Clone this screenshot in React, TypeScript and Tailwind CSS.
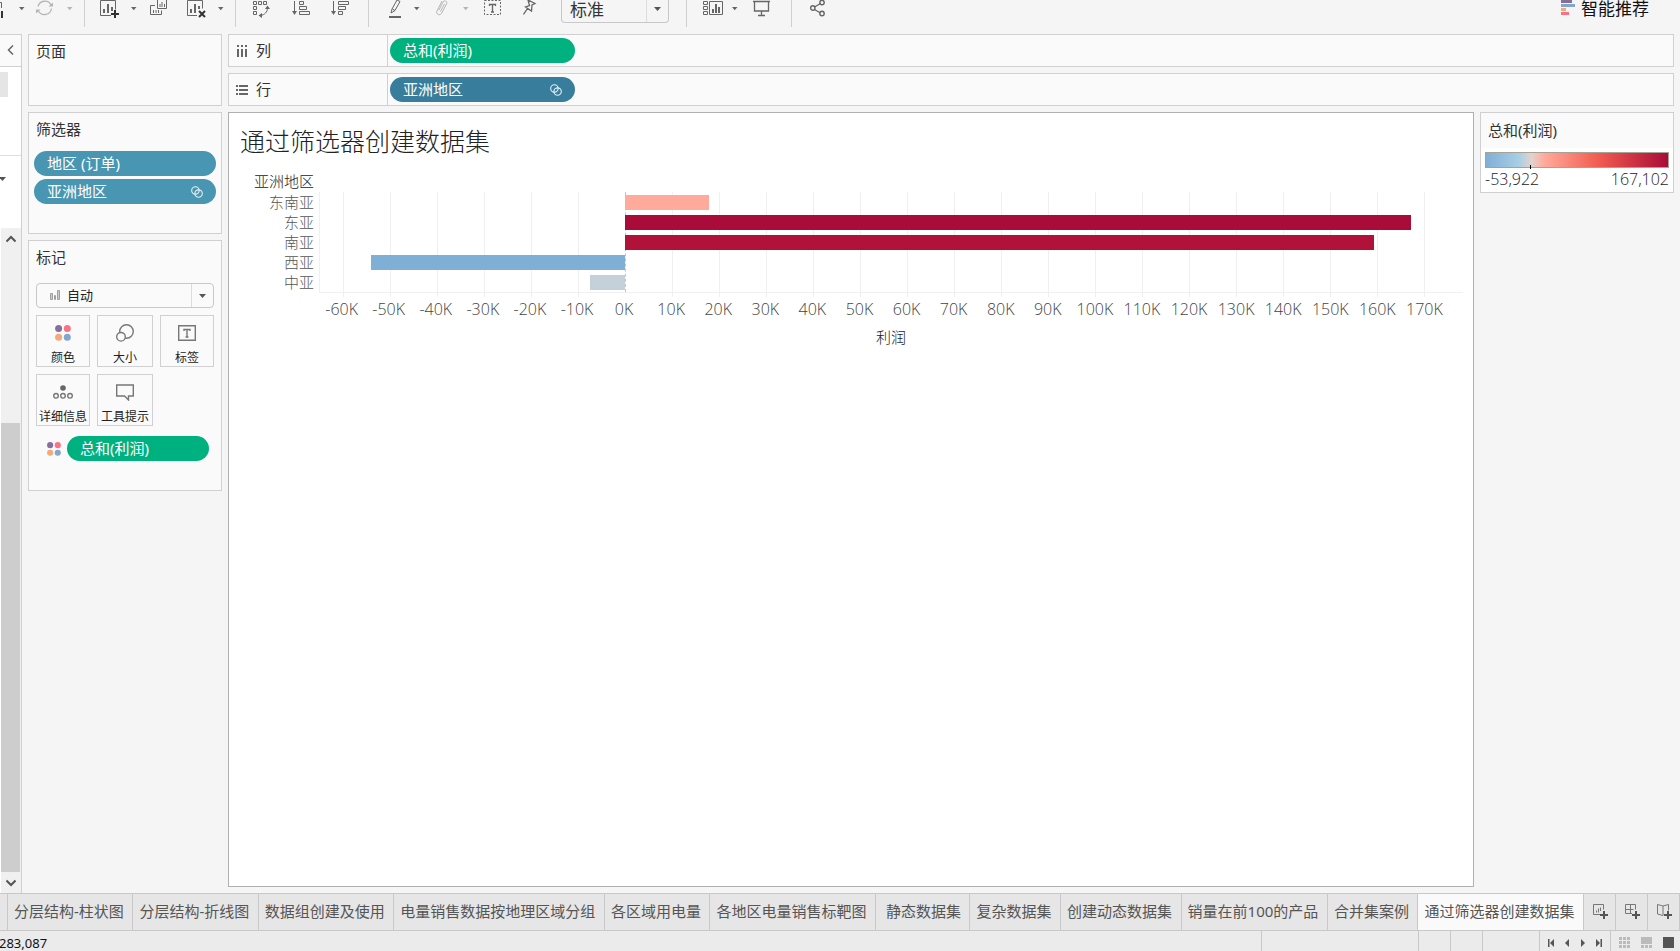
import React from "react";

const ui = "font-['Noto_Sans','Noto_Sans_CJK_SC',sans-serif]";
const chartFont = "font-['Open_Sans','Noto_Sans_CJK_SC',sans-serif]";

function Caret() {
  return (
    <svg width="6" height="4" viewBox="0 0 6 4" aria-hidden="true">
      <path d="M0 0h5.5L2.75 3.2z" fill="currentColor" />
    </svg>
  );
}

function SelectCaret() {
  return (
    <svg width="7" height="4" viewBox="0 0 7 4" aria-hidden="true">
      <path d="M0 0h7L3.500 4z" fill="currentColor" />
    </svg>
  );
}

function Chevron({ d }: { d: string }) {
  return (
    <svg width="10" height="10" viewBox="0 0 10 10" fill="none" stroke="#555" strokeWidth="2" aria-hidden="true">
      <path d={d} />
    </svg>
  );
}

function Dots({ size }: { size: number }) {
  return (
    <svg width={size} height={size} viewBox="0 0 16 16" className="shrink-0" aria-hidden="true">
      <circle cx="3.6" cy="3.6" r="3.5" fill="#85709b" />
      <circle cx="12.3" cy="3.6" r="3.5" fill="#fb7185" />
      <circle cx="3.6" cy="12.3" r="3.5" fill="#f4a87c" />
      <circle cx="12.3" cy="12.3" r="3.5" fill="#82a6cc" />
    </svg>
  );
}

function SetIcon() {
  return (
    <svg width="12" height="12" viewBox="0 0 12 12" fill="none" stroke="#e6f1f6" strokeWidth="1.1" className="shrink-0" aria-hidden="true">
      <circle cx="4.4" cy="4.4" r="3.7" />
      <circle cx="7.6" cy="7.6" r="3.7" />
    </svg>
  );
}

function Pill({ label, color, set = false }: { label: string; color: string; set?: boolean }) {
  return (
    <button className={`flex h-[25px] w-full items-center justify-between rounded-full pr-[13px] pl-[13px] text-[15px] leading-none whitespace-nowrap text-white ${color}`}>
      <span>{label}</span>
      {set && <SetIcon />}
    </button>
  );
}

function Tool({ label, width, muted = false, children }: { label: string; width: number; muted?: boolean; children: React.ReactNode }) {
  return (
    <button aria-label={label} className={`h-[18px] shrink-0 ${muted ? "text-[#b5b5b5]" : "text-[#666]"}`}>
      <svg width={width} height="18" viewBox={`0 0 ${width} 18`} fill="none" stroke="currentColor" aria-hidden="true">
        {children}
      </svg>
    </button>
  );
}

function Menu({ label, muted = false, className = "" }: { label: string; muted?: boolean; className?: string }) {
  return (
    <button aria-label={label} className={`flex h-[18px] shrink-0 items-center ${muted ? "text-[#b5b5b5]" : "text-[#666]"} ${className}`}>
      <Caret />
    </button>
  );
}

const Separator = ({ className = "" }: { className?: string }) => <div className={`h-[27px] w-px shrink-0 bg-[#d0d0d0] ${className}`} />;

function Toolbar() {
  return (
    <header className="flex h-[34px] shrink-0 items-start">
      <Tool label="数据源" width={4}>
        <path d="M0 2.500h1.500V8" />
        <path d="M2 11v7" stroke="#333" strokeWidth="2" />
      </Tool>
      <Menu label="数据源选项" className="ml-[15px]" />
      <div className="ml-[11px] flex">
        <Tool label="刷新" width={18} muted>
          <path d="M2 6.500A7 7 0 0 1 15 5M15.500 8.500A7 7 0 0 1 2.500 11" strokeWidth="1.300" />
          <path d="M12.500 6.500H17V2.500zM0 13.500V9.500h4.500z" fill="currentColor" stroke="none" />
        </Tool>
      </div>
      <Menu label="刷新选项" muted className="ml-[13px]" />
      <Separator className="ml-[11px]" />
      <div className="ml-[15px] flex">
        <Tool label="新建工作表" width={20}>
          <path d="M11 15.500H.5V.5h15v9" />
          <path d="M4 13V9M8 13V4M12 11V7" strokeWidth="2" />
          <path d="M15 10v8M11 14h8" stroke="#333" strokeWidth="2" />
        </Tool>
      </div>
      <Menu label="新建选项" className="ml-[11px]" />
      <div className="ml-[13px] flex">
        <Tool label="复制" width={18}>
          <path d="M7.500 8.500V-1h9v9.500h-9M5 5.500H.5v9h11v-4M10 7V4M12 7V2M14.500 7V4M3.500 13v-3M6 13v-3M8.500 13v-3" />
        </Tool>
      </div>
      <div className="ml-[19px] flex">
        <Tool label="清除工作表" width={20}>
          <path d="M10 15.500H.5V.5h15v8" />
          <path d="M4 13V9M8 13V4M12 9V6" strokeWidth="2" />
          <path d="m12 11 6 6m0-6-6 6" stroke="#333" strokeWidth="2" />
        </Tool>
      </div>
      <Menu label="清除选项" className="ml-[11px]" />
      <Separator className="ml-[11px]" />
      <div className="ml-[17px] flex">
        <Tool label="交换行和列" width={18}>
          <path d="M.5 1.500h3v3h-3zM5.500 1.500h3v3h-3zM10.500 1.500h3v3h-3zM.5 6.500h3v3h-3zM.5 11.500h3v3h-3zM14.500 8c0 4-3 7-7 7.500" />
          <path d="M12 9l2.500-3.500L17 9zM9 13l-3.500 2.500L9 18z" fill="currentColor" stroke="none" />
        </Tool>
      </div>
      <div className="ml-[21px] flex">
        <Tool label="升序" width={18}>
          <path d="M2.500 1v12M7.500 1.500h4v3h-4zM7.500 6.500h7v3h-7zM7.500 11.500h10v3h-10z" />
          <path d="M0 11h5L2.500 15z" fill="currentColor" stroke="none" />
        </Tool>
      </div>
      <div className="ml-[21px] flex">
        <Tool label="降序" width={18}>
          <path d="M2.500 1v12M7.500 1.500h10v3h-10zM7.500 6.500h7v3h-7zM7.500 11.500h4v3h-4z" />
          <path d="M0 11h5L2.500 15z" fill="currentColor" stroke="none" />
        </Tool>
      </div>
      <Separator className="ml-[19px]" />
      <div className="ml-[20px] flex">
        <Tool label="突出显示" width={13}>
          <path d="m2 13 1-4L8 0l3 1.500L6 10.500zM3.500 9 6 10.500" />
          <path d="M0 17h12" strokeWidth="2" />
        </Tool>
      </div>
      <Menu label="突出显示选项" className="ml-[12px]" />
      <div className="ml-[15px] flex">
        <Tool label="分组" width={13} muted>
          <path d="m4 10 4-8c1-2 5-1 3.500 2L6.500 13.500c-1.500 2.500-6 1-4.500-2.500L7 1M5.500 11.500l4-7.500" />
        </Tool>
      </div>
      <Menu label="分组选项" muted className="ml-[15px]" />
      <div className="ml-[15px] flex">
        <Tool label="显示标记标签" width={18}>
          <path d="M.5.5h16v14H.5z" strokeDasharray="2 1.500" />
          <path d="M5.500 6V4.500h6V6M8.500 4.500V12M7 12h3" strokeWidth="1.300" />
        </Tool>
      </div>
      <div className="ml-[21px] flex">
        <Tool label="固定轴" width={14}>
          <path d="m5 0 7 3.500-3 1.500-.5 6-6-4 4-1.500zM4.500 8.500.5 14.500" strokeWidth="1.300" />
        </Tool>
      </div>
      <div className="relative ml-[24px] flex">
        <select aria-label="适合" className="h-[23px] w-[108px] appearance-none rounded-b-sm border border-t-0 border-[#c8c8c8] bg-[#f5f5f5] pb-[3px] pl-2 text-[17px] leading-[20px] text-[#333]">
          <option>标准</option>
        </select>
        <div className="pointer-events-none absolute top-0 right-px flex h-[22px] w-[22px] items-center justify-center border-l border-[#dcdcdc] pb-1 text-[#555]">
          <SelectCaret />
        </div>
      </div>
      <Separator className="ml-[17px]" />
      <div className="ml-[16px] flex">
        <Tool label="显示卡" width={21}>
          <path d="M.5 1.500h4v3h-4zM.5 6.500h4v3h-4zM.5 11.500h4v3h-4zM6.500 1.500h13v13h-13z" />
          <path d="M10 13v-4M13 13V4M16 13V7" strokeWidth="2" />
        </Tool>
      </div>
      <Menu label="显示卡选项" className="ml-[8px]" />
      <div className="ml-[15px] flex">
        <Tool label="演示模式" width={18}>
          <path d="M0 1.500h17M1.500 2v9h14V2M8.500 11v4M5 15.500h7" strokeWidth="1.300" />
        </Tool>
      </div>
      <Separator className="ml-[20px]" />
      <div className="ml-[18px] flex">
        <Tool label="共享" width={16}>
          <path d="m4.500 7 6-3.500M4.500 9.500l6 3.500" strokeWidth="1.300" />
          <path d="M5 8a2.200 2.200 0 1 1-4.400 0A2.200 2.200 0 0 1 5 8zM14.200 2.500a2.200 2.200 0 1 1-4.400 0 2.200 2.200 0 0 1 4.400 0zM14.200 13.500a2.200 2.200 0 1 1-4.400 0 2.200 2.200 0 0 1 4.400 0z" strokeWidth="1.400" />
        </Tool>
      </div>
      <button className="mr-[31px] ml-auto flex items-start gap-[6px] text-[17px] leading-[18px] text-[#111]">
        <svg width="14" height="16" viewBox="0 0 14 16" aria-hidden="true">
          <path d="M0 0h11v3H0z" fill="#85709b" />
          <path d="M0 4h14v3H0z" fill="#82a6cc" />
          <path d="M0 8h5v3H0z" fill="#f4a87c" />
          <path d="M0 12h8v3H0z" fill="#fb7185" />
        </svg>
        <span>智能推荐</span>
      </button>
    </header>
  );
}

function LeftStrip() {
  return (
    <aside className="flex w-[22px] shrink-0 flex-col border-r border-[#d0d0d0] bg-white">
      <button aria-label="折叠" className="flex h-[33px] shrink-0 items-center justify-center border-y border-[#d0d0d0] bg-[#fafafa] pb-[2px]">
        <svg width="7" height="10" viewBox="0 0 7 10" fill="none" stroke="#666" strokeWidth="1.500" aria-hidden="true">
          <path d="M6 .5 1.500 5 6 9.500" />
        </svg>
      </button>
      <div className="flex h-[89px] shrink-0 border-b border-[#dedede] pt-[5px]">
        <div className="h-[25px] w-2 bg-[#e5e5e5]" />
      </div>
      <div className="h-[72px] shrink-0 pt-[21px] text-[#555]">
        <svg width="6" height="4" viewBox="0 0 6 4" className="block" aria-hidden="true">
          <path d="M-1 0h7L2.500 4z" fill="currentColor" />
        </svg>
      </div>
      <div className="ml-px flex flex-1 flex-col bg-[#f0f0f0]">
        <button aria-label="向上滚动" className="flex h-[22px] items-center justify-center pr-px">
          <Chevron d="M.5 7.500 5 3l4.500 4.500" />
        </button>
        <div className="mt-[173px] w-[19px] flex-1 bg-[#cdcdcd]" />
        <button aria-label="向下滚动" className="flex h-[21px] items-center justify-center pr-px">
          <Chevron d="M.5 2.500 5 7l4.500-4.500" />
        </button>
      </div>
    </aside>
  );
}

function Card({ title, className, children }: { title: string; className: string; children?: React.ReactNode }) {
  return (
    <section className={`border border-[#d0d0d0] bg-[#fafafa] pt-[5px] ${className}`}>
      <h2 className="px-[7px] text-[15px] leading-[22px] text-[#333]">{title}</h2>
      {children}
    </section>
  );
}

function MarkButton({ label, children }: { label: string; children: React.ReactNode }) {
  return (
    <button className="flex h-[52px] flex-col items-center border border-[#d0d0d0] bg-[#fafafa] pt-[8px] text-[12px] leading-4 whitespace-nowrap text-[#222]">
      <span className="flex h-[18px] items-center">{children}</span>
      <span className="mt-[8px]">{label}</span>
    </button>
  );
}

function Cards() {
  return (
    <div className="flex w-[194px] shrink-0 flex-col gap-[6px]">
      <Card title="页面" className="h-[72px]" />
      <Card title="筛选器" className="h-[122px]">
        <div className="mt-[11px] flex flex-col gap-[3px] px-[5px]">
          <Pill label="地区 (订单)" color="bg-[#4996b2]" />
          <Pill label="亚洲地区" color="bg-[#4996b2]" set />
        </div>
      </Card>
      <Card title="标记" className="h-[251px]">
        <div className="relative mx-[7px] mt-[15px]">
          <select aria-label="标记类型" className="block h-[25px] w-full appearance-none rounded-sm border border-[#c8c8c8] bg-[#fafafa] pl-[30px] text-[13px] text-[#222]">
            <option>自动</option>
          </select>
          <svg width="10" height="10" viewBox="0 0 10 10" fill="none" stroke="#a0a0a0" className="pointer-events-none absolute top-[7px] left-[14px]" aria-hidden="true">
            <path d="M.5 3.500h2v6h-2zM4.500 5.500h1v4h-1zM7.500.5h2v9h-2z" fill="#ccc" />
          </svg>
          <div className="pointer-events-none absolute inset-y-px right-px flex w-[22px] items-center justify-center border-l border-[#dcdcdc] text-[#555]">
            <SelectCaret />
          </div>
        </div>
        <div className="mx-[7px] mt-[7px] grid grid-cols-[54px_56px_54px] justify-between gap-y-[7px]">
          <MarkButton label="颜色">
            <Dots size={16} />
          </MarkButton>
          <MarkButton label="大小">
            <svg width="18" height="18" viewBox="0 0 18 18" fill="none" stroke="#777" strokeWidth="1.400" aria-hidden="true">
              <circle cx="10.500" cy="7.500" r="6.800" />
              <circle cx="5" cy="12.800" r="4.300" fill="#fafafa" />
            </svg>
          </MarkButton>
          <MarkButton label="标签">
            <svg width="18" height="16" viewBox="0 0 18 16" fill="none" stroke="#777" strokeWidth="1.400" aria-hidden="true">
              <path d="M.7.7h16.600v14.600H.7zM6 6V4.500h6V6M9 4.500V12M7.500 12h3" />
            </svg>
          </MarkButton>
          <MarkButton label="详细信息">
            <svg width="20" height="14" viewBox="0 0 20 14" fill="none" stroke="#777" strokeWidth="1.400" aria-hidden="true">
              <circle cx="10" cy="3" r="2.800" fill="#666" stroke="none" />
              <circle cx="3" cy="10.800" r="2.300" />
              <circle cx="10" cy="10.800" r="2.300" />
              <circle cx="17" cy="10.800" r="2.300" />
            </svg>
          </MarkButton>
          <MarkButton label="工具提示">
            <svg width="18" height="17" viewBox="0 0 18 17" fill="none" stroke="#777" strokeWidth="1.400" aria-hidden="true">
              <path d="M.7 1h16.600v11h-4.800v4l-4-4H.7z" />
            </svg>
          </MarkButton>
        </div>
        <div className="mt-[10px] flex items-center gap-[6px] pr-3 pl-[18px]">
          <Dots size={14} />
          <Pill label="总和(利润)" color="bg-[#00b180]" />
        </div>
      </Card>
    </div>
  );
}

function Shelf({ label, icon, children }: { label: string; icon: string; children: React.ReactNode }) {
  return (
    <div className="flex h-[33px] border border-[#d0d0d0] bg-[#fafafa]">
      <div className="flex w-[159px] items-center gap-2 border-r border-[#d0d0d0] pl-[7px] text-[15px] leading-none text-[#333]">
        <svg width="12" height="12" viewBox="0 0 12 12" fill="none" stroke="#666" strokeWidth="2" aria-hidden="true">
          <path d={icon} />
        </svg>
        {label}
      </div>
      <div className="flex w-[187px] items-center pl-[2px]">{children}</div>
    </div>
  );
}

const MIN = -64.8;
const MAX = 178.2;
const SPAN = MAX - MIN;
const pct = (v: number) => `${((v - MIN) / SPAN) * 100}%`;

const ROWS = [
  { name: "东南亚", value: 17.9, color: "#ffaa9b" },
  { name: "东亚", value: 167.1, color: "#a90c38" },
  { name: "南亚", value: 159.2, color: "#b11239" },
  { name: "西亚", value: -53.92, color: "#80afd5" },
  { name: "中亚", value: -7.4, color: "#c5d1da" },
];
const TICKS = Array.from({ length: 24 }, (_, i) => (i - 6) * 10);

function Chart() {
  return (
    <section className={`min-w-0 flex-1 border border-[#b0b0b0] bg-white pt-[9px] pl-[11px] ${chartFont}`}>
      <h1 className="text-[25px] leading-[38px] font-light text-[#222]">通过筛选器创建数据集</h1>
      <div className="mt-[9px] flex pr-[10px]">
        <div className="w-[79px] shrink-0 text-right text-[15px] leading-5 font-light">
          <div className="h-[23px] pr-[5px] leading-[25px] text-[#222]">亚洲地区</div>
          {ROWS.map((r) => (
            <div key={r.name} className="h-5 pr-[5px] text-[#555]">
              {r.name}
            </div>
          ))}
        </div>
        <div className="min-w-0 flex-1 pt-[23px]">
          <div className="relative h-[101px] border-b border-l border-[#f0f0f0]">
            {TICKS.map((t) => (
              <div key={t} className={`absolute top-0 w-px ${t === 0 ? "h-[100px] border-l border-dashed border-[#c4c4c4]" : "h-[105px] bg-[#f0f0f0]"}`} style={{ left: pct(t) }} />
            ))}
            {ROWS.map((r, i) => (
              <div
                key={r.name}
                className="absolute h-[15px]"
                style={{ top: 3 + i * 20, left: pct(Math.min(0, r.value)), width: `${(Math.abs(r.value) / SPAN) * 100}%`, background: r.color }}
              />
            ))}
          </div>
          <div className="relative h-[33px] text-[16px] leading-5 font-light text-[#444]">
            {TICKS.map((t) => (
              <span key={t} className="absolute top-[6px] -translate-x-1/2" style={{ left: pct(t) }}>
                {t}K
              </span>
            ))}
          </div>
          <div className="text-center text-[15px] leading-[22px] font-light text-[#222]">利润</div>
        </div>
      </div>
    </section>
  );
}

function Legend() {
  return (
    <aside className="h-[81px] w-[194px] shrink-0 border border-[#d0d0d0] bg-white">
      <h2 className="h-[35px] bg-[#fafafa] pt-[6px] pl-[7px] text-[15px] leading-[22px] text-[#333]">总和(利润)</h2>
      <div className="relative mx-1 mt-1 h-4 border border-[#a8a195] bg-[linear-gradient(to_right,#80afd5_0%,#a8cee5_18%,#e2d3cf_25%,#ffaa9b_32%,#f15b4f_62%,#a90c38_100%)]">
        <div className="absolute -bottom-[2px] left-[44px] h-1 w-px bg-black" />
      </div>
      <div className={`mx-1 flex justify-between text-[16px] leading-[22px] font-light text-[#222] ${chartFont}`}>
        <span>-53,922</span>
        <span>167,102</span>
      </div>
    </aside>
  );
}

const TABS = [
  "分层结构-柱状图",
  "分层结构-折线图",
  "数据组创建及使用",
  "电量销售数据按地理区域分组",
  "各区域用电量",
  "各地区电量销售标靶图",
  "\u00a0静态数据集",
  "复杂数据集",
  "创建动态数据集",
  "销量在前100的产品",
  "合并集案例",
  "通过筛选器创建数据集",
];

const NEW_BUTTONS = [
  { label: "新建工作表", d: "M7 10.500H.5V.5h10v5M3.500 8.500v-2M5.500 8.500v-4M7.500 7V3.500" },
  { label: "新建仪表板", d: "M7 9.500H.5V.5h10v5M.5 5.500h8M5.500.5v9" },
  { label: "新建故事", d: "M6 11.500.5 10V.5L6 2v9.500M6 2 11.500.5v6" },
];

function SheetTabs() {
  return (
    <nav className="flex h-[38px] shrink-0 border-y border-[#c8c8c8] bg-[#e6e6e6]">
      <div className="w-2 shrink-0 border-r border-[#c8c8c8]" />
      {TABS.map((t) => (
        <a
          key={t}
          href="#"
          className={`flex flex-auto items-center border-r border-[#c8c8c8] pr-[7px] pb-[2px] pl-[6px] text-[15px] leading-none whitespace-nowrap text-[#555] ${t === "通过筛选器创建数据集" ? "bg-[#fafafa]" : ""}`}
        >
          {t}
        </a>
      ))}
      {NEW_BUTTONS.map((b) => (
        <button key={b.label} aria-label={b.label} className="flex w-8 shrink-0 items-center border-r border-[#c8c8c8] pl-[9px]">
          <svg width="15" height="16" viewBox="0 0 15 16" fill="none" stroke="#777" aria-hidden="true">
            <path d={b.d} />
            <path d="M11 7v8M7 11h8" stroke="#555" strokeWidth="2" />
          </svg>
        </button>
      ))}
    </nav>
  );
}

const NAV_ICONS = [
  { label: "第一个", d: "M0 0h1.500v8H0zM6 0v8L2 4z" },
  { label: "上一个", d: "M5 0v8L1 4z" },
  { label: "下一个", d: "M1 0v8l4-4z" },
  { label: "最后一个", d: "M0 0v8l4-4zM4.500 0H6v8H4.500z" },
];

function StatusBar() {
  return (
    <footer className="flex h-[20px] shrink-0 items-stretch overflow-hidden bg-[#ebebeb]">
      <span className="-ml-px flex-1 pt-[4px] text-[13px] leading-4 text-[#111]">283,087</span>
      <div className="w-[157px] border-l border-[#c8c8c8]" />
      <div className="w-8 border-l border-[#c8c8c8]" />
      <div className="w-8 border-l border-[#c8c8c8]" />
      <div className="w-[57px] border-l border-[#c8c8c8]" />
      <div className="flex w-[71px] items-center justify-between border-l border-[#c8c8c8] px-[8px] pt-[3px]">
        {NAV_ICONS.map((n) => (
          <button key={n.label} aria-label={n.label}>
            <svg width="6" height="8" viewBox="0 0 6 8" fill="#555" className="block" aria-hidden="true">
              <path d={n.d} />
            </svg>
          </button>
        ))}
      </div>
      <div className="flex w-[70px] items-center gap-[11px] border-l border-[#c8c8c8] pt-[3px] pl-2">
        <button aria-label="缩略图">
          <svg width="11" height="11" viewBox="0 0 11 11" fill="#bbb" className="block" aria-hidden="true">
            <path d="M0 0h3v3H0zM4 0h3v3H4zM8 0h3v3H8zM0 4h3v3H0zM4 4h3v3H4zM8 4h3v3H8zM0 8h3v3H0zM4 8h3v3H4zM8 8h3v3H8z" />
          </svg>
        </button>
        <button aria-label="幻灯片">
          <svg width="11" height="11" viewBox="0 0 11 11" fill="#bbb" className="block" aria-hidden="true">
            <path d="M0 0h11v7H0zM0 8h3v3H0zM4 8h3v3H4zM8 8h3v3H8z" />
          </svg>
        </button>
        <button aria-label="工作表">
          <svg width="11" height="11" viewBox="0 0 11 11" fill="#555" className="block" aria-hidden="true">
            <path d="M0 0h11v11H0z" />
          </svg>
        </button>
      </div>
    </footer>
  );
}

export default function App() {
  return (
    <div className={`flex h-screen flex-col overflow-hidden bg-[#f5f5f5] ${ui}`}>
      <Toolbar />
      <main className="flex min-h-0 flex-1">
        <LeftStrip />
        <div className="flex min-w-0 flex-1 gap-[6px] pr-[6px] pb-[6px] pl-[6px]">
          <Cards />
          <div className="flex min-w-0 flex-1 flex-col gap-[6px]">
            <Shelf label="列" icon="M2 4v8M6 4v8M10 4v8M2 0v2M6 0v2M10 0v2">
              <Pill label="总和(利润)" color="bg-[#00b180]" />
            </Shelf>
            <Shelf label="行" icon="M3 2h9M3 6h9M3 10h9M0 2h2M0 6h2M0 10h2">
              <Pill label="亚洲地区" color="bg-[#387d9b]" set />
            </Shelf>
            <div className="flex min-h-0 flex-1 gap-[6px]">
              <Chart />
              <Legend />
            </div>
          </div>
        </div>
      </main>
      <SheetTabs />
      <StatusBar />
    </div>
  );
}
